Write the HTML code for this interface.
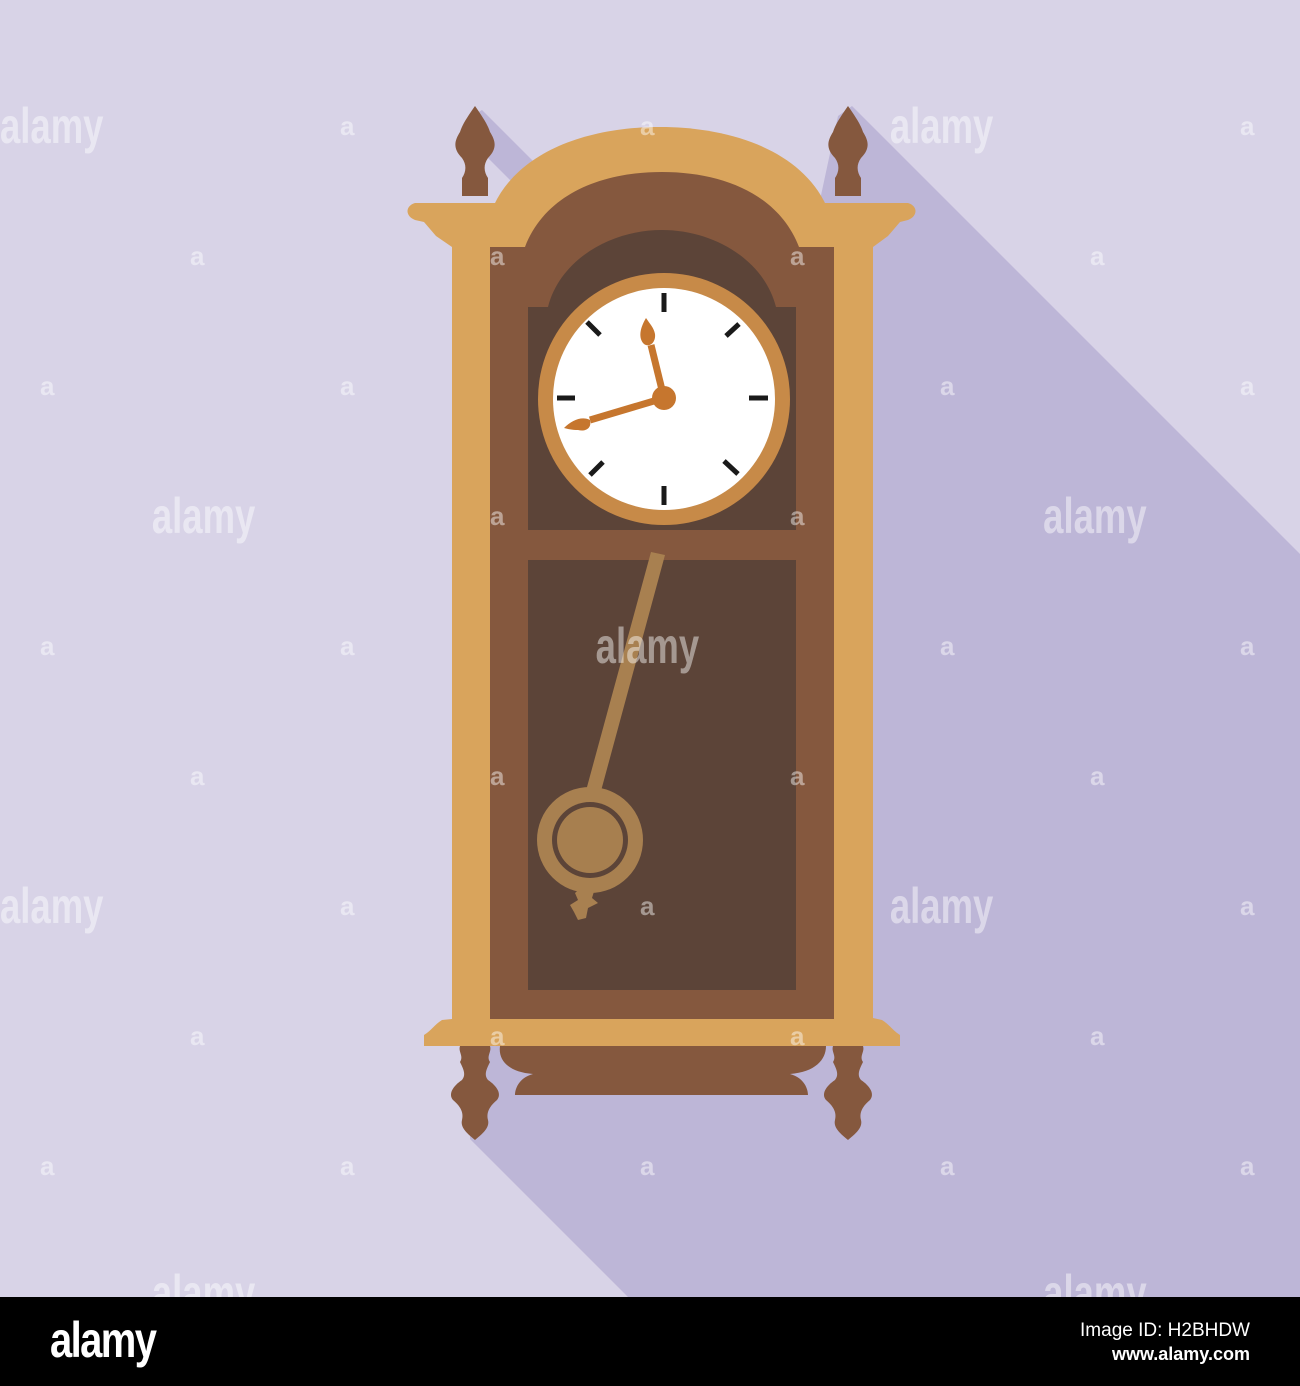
<!DOCTYPE html>
<html><head><meta charset="utf-8"><style>
html,body{margin:0;padding:0;background:#d8d3e7;}
body{width:1300px;height:1386px;overflow:hidden;position:relative;font-family:"Liberation Sans",sans-serif;}
svg{position:absolute;left:0;top:0;}
.bar{position:absolute;left:0;top:1297px;width:1300px;height:89px;background:#000;color:#fff;}
</style></head><body>
<svg width="1300" height="1297" viewBox="0 0 1300 1297">
<rect width="1300" height="1297" fill="#d8d3e7"/>
<polygon points="838,116 852,106 1300,554 1300,1297 628,1297 470,1139 470,260 820,200" fill="#bdb6d7"/>
<polygon points="468,118 482,110 540,168 515,185 470,140" fill="#bdb6d7"/>
<!-- finials top -->
<g fill="#85583e">
<path d="M475,106 C468,116 462,125 460,132 C455,140 452,148 462,158 C467,165 466,172 462,178 L462,196 L488,196 L488,178 C484,172 483,165 488,158 C498,148 495,140 490,132 C488,125 482,116 475,106Z"/>
<path d="M848,106 C841,116 835,125 833,132 C828,140 825,148 835,158 C840,165 839,172 835,178 L835,196 L861,196 L861,178 C857,172 856,165 861,158 C871,148 868,140 863,132 C861,125 855,116 848,106Z"/>
</g>
<path d="M494,205 C520,150 590,127 660,127 C730,127 800,150 826,205Z" fill="#d9a45c"/>
<path d="M415,203 L908,203 C918,206 918,216 908,220 L900,222 L888,236 L873,247 L452,247 L436,236 L424,222 L415,220 C405,216 405,206 415,203Z" fill="#d9a45c"/>
<rect x="452" y="220" width="421" height="805" fill="#d9a45c"/>
<path d="M490,247 L525,247 C545,195 600,172 662,172 C724,172 779,195 799,247 L834,247 L834,1040 L490,1040Z" fill="#85583e"/>
<path d="M528,307 L548,307 C560,260 610,230 662,230 C714,230 764,260 776,307 L796,307 L796,530 L528,530Z" fill="#5c4438"/>
<rect x="528" y="560" width="268" height="430" fill="#5c4438"/>
<path d="M452,1019 L873,1019 L873,1018 L882,1020 C890,1025 892,1030 900,1035 L900,1046 L424,1046 L424,1035 C432,1030 434,1025 442,1020Z" fill="#d9a45c"/>
<path d="M500,1046 L826,1046 C826,1060 815,1072 790,1074 C805,1078 808,1090 808,1095 L515,1095 C515,1090 518,1078 533,1074 C508,1072 498,1060 500,1046Z" fill="#85583e"/>
<g fill="#85583e">
<path d="M460,1046 L490,1046 C492,1052 486,1056 490,1062 C486,1070 484,1075 488,1080 C497,1086 502,1094 497,1100 C490,1106 486,1112 488,1120 C490,1128 482,1134 475,1140 C468,1134 460,1128 462,1120 C464,1112 460,1106 453,1100 C448,1094 453,1086 462,1080 C466,1075 464,1070 460,1062 C464,1056 458,1052 460,1046Z"/>
<path d="M833,1046 L863,1046 C865,1052 859,1056 863,1062 C859,1070 857,1075 861,1080 C870,1086 875,1094 870,1100 C863,1106 859,1112 861,1120 C863,1128 855,1134 848,1140 C841,1134 833,1128 835,1120 C837,1112 833,1106 826,1100 C821,1094 826,1086 835,1080 C839,1075 837,1070 833,1062 C837,1056 831,1052 833,1046Z"/>
</g>
<g fill="#a88050">
<polygon points="651,552 665,555 598,802 584,798"/>
<circle cx="590" cy="840" r="53"/>
<path d="M584,885 L596,885 L592,898 L598,903 L588,908 L586,918 L578,920 L574,912 L570,905 L578,900 L575,893Z"/>
</g>
<circle cx="590" cy="840" r="38" fill="#5c4438"/>
<circle cx="590" cy="840" r="33" fill="#a77f4f"/>
<circle cx="664" cy="399" r="126" fill="#c78a48"/>
<circle cx="664" cy="399" r="111" fill="#ffffff"/>
<g stroke="#1a1a1a" stroke-width="5">
<line x1="664" y1="293" x2="664" y2="312"/>
<line x1="664" y1="486" x2="664" y2="505"/>
<line x1="557" y1="398" x2="575" y2="398"/>
<line x1="749" y1="398" x2="768" y2="398"/>
<line x1="587" y1="322" x2="600" y2="335"/>
<line x1="739" y1="324" x2="726" y2="336"/>
<line x1="590" y1="475" x2="603" y2="462"/>
<line x1="738" y1="474" x2="724" y2="461"/>
</g>
<g fill="#c6762e" stroke="#c6762e">
<line x1="664" y1="398" x2="651" y2="345" stroke-width="7"/>
<line x1="664" y1="398" x2="590" y2="420" stroke-width="7"/>
<circle cx="664" cy="398" r="12" stroke="none"/>
<path d="M646,318 C640,328 638,338 644,344 C650,348 656,342 655,334 C654,328 650,324 646,318Z" stroke="none"/>
<path d="M564,428 C572,420 582,416 590,420 C592,428 586,432 578,430 C572,430 568,429 564,428Z" stroke="none"/>
</g>
<g font-family="Liberation Sans,sans-serif" font-weight="bold" fill="#fff" fill-opacity="0.45">
<g font-size="50" transform="scale(0.73,1)">
<text x="0" y="143">alamy</text>
<text x="1219" y="143">alamy</text>
<text x="208" y="533">alamy</text>
<text x="1429" y="533">alamy</text>
<text x="816" y="663">alamy</text>
<text x="0" y="923">alamy</text>
<text x="1219" y="923">alamy</text>
<text x="208" y="1310">alamy</text>
<text x="1429" y="1310">alamy</text>
</g>
<g font-size="26">
<text x="340" y="135">a</text><text x="640" y="135">a</text><text x="1240" y="135">a</text>
<text x="190" y="265">a</text><text x="490" y="265">a</text><text x="790" y="265">a</text><text x="1090" y="265">a</text>
<text x="40" y="395">a</text><text x="340" y="395">a</text><text x="940" y="395">a</text><text x="1240" y="395">a</text>
<text x="490" y="525">a</text><text x="790" y="525">a</text>
<text x="40" y="655">a</text><text x="340" y="655">a</text><text x="940" y="655">a</text><text x="1240" y="655">a</text>
<text x="190" y="785">a</text><text x="490" y="785">a</text><text x="790" y="785">a</text><text x="1090" y="785">a</text>
<text x="340" y="915">a</text><text x="640" y="915">a</text><text x="1240" y="915">a</text>
<text x="190" y="1045">a</text><text x="490" y="1045">a</text><text x="790" y="1045">a</text><text x="1090" y="1045">a</text>
<text x="40" y="1175">a</text><text x="340" y="1175">a</text><text x="640" y="1175">a</text><text x="940" y="1175">a</text><text x="1240" y="1175">a</text>
</g>
</g>
</svg>
<div class="bar">
<div style="position:absolute;left:50px;top:14px;font-size:50px;font-weight:bold;letter-spacing:-2px;transform:scaleX(0.8);transform-origin:left;">alamy</div>
<div style="position:absolute;right:50px;top:23px;font-size:19px;">Image ID: H2BHDW</div>
<div style="position:absolute;right:50px;top:47px;font-size:18px;font-weight:bold;">www.alamy.com</div>
</div>
</body></html>
